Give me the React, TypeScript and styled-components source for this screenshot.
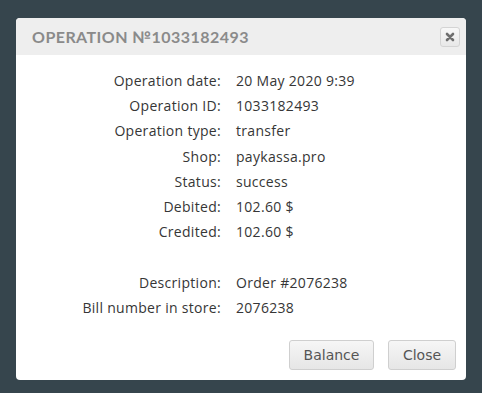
import React from "react";
import styled, { createGlobalStyle } from "styled-components";

const Global = createGlobalStyle`
  html, body {
    margin: 0;
    padding: 0;
    background: #36454d;
    height: 100%;
  }
  #root {
    padding: 18px 16px 0 16px;
  }
`;

const Dialog = styled.div`
  width: 450px;
  height: 362px;
  background: #fff;
  border-radius: 4px;
  display: flex;
  flex-direction: column;
  overflow: hidden;
  box-sizing: border-box;
`;

const Header = styled.div`
  height: 37px;
  background: #eeeeee;
  display: flex;
  align-items: center;
  justify-content: space-between;
  padding: 0 6px 0 16px;
`;

const Title = styled.h1`
  margin: 0;
  font-family: "Lato", "Open Sans", sans-serif;
  font-weight: 700;
  font-size: 16px;
  letter-spacing: 0.45px;
  color: #8a8a8a;
  text-transform: uppercase;
`;

const CloseX = styled.button`
  width: 20px;
  height: 20px;
  padding: 0;
  border: 1px solid #d4d4d4;
  border-radius: 3px;
  background: linear-gradient(#f8f8f8, #e8e8e8);
  display: flex;
  align-items: center;
  justify-content: center;
  cursor: pointer;
`;

const Body = styled.div`
  flex: 1;
  display: grid;
  grid-template-columns: 205px 1fr;
  grid-auto-rows: 25.2px;
  column-gap: 15px;
  padding-top: 13px;
  align-content: start;
  font-family: "Open Sans", sans-serif;
  font-size: 14px;
  letter-spacing: 0.3px;
  color: #363636;
`;

const Label = styled.div`
  text-align: right;
  line-height: 25px;
  white-space: nowrap;
`;

const Value = styled.div`
  line-height: 25px;
  white-space: nowrap;
`;

const Spacer = styled.div`
  grid-column: 1 / span 2;
`;

const Footer = styled.div`
  display: flex;
  justify-content: flex-end;
  gap: 14px;
  padding: 0 10px 10px 0;
`;

const Button = styled.button<{ $w: number }>`
  width: ${(p) => p.$w}px;
  height: 30px;
  border: 1px solid #cfcfcf;
  border-radius: 3px;
  background: linear-gradient(#f6f6f6, #e6e6e6);
  font-family: "DejaVu Sans", Verdana, sans-serif;
  font-size: 14px;
  color: #555;
  padding: 0;
  cursor: pointer;
`;

const rows: [string, string][] = [
  ["Operation date:", "20 May 2020 9:39"],
  ["Operation ID:", "1033182493"],
  ["Operation type:", "transfer"],
  ["Shop:", "paykassa.pro"],
  ["Status:", "success"],
  ["Debited:", "102.60 $"],
  ["Credited:", "102.60 $"],
];

const extra: [string, string][] = [
  ["Description:", "Order #2076238"],
  ["Bill number in store:", "2076238"],
];

const App = () => {
  return (
    <>
      <Global />
      <Dialog>
        <Header>
          <Title>Operation №1033182493</Title>
          <CloseX>
            <svg width="10" height="10" viewBox="0 0 10 10">
              <path d="M2 2 L8 8 M8 2 L2 8" stroke="#6f6f6f" strokeWidth="2.6" strokeLinecap="round" />
            </svg>
          </CloseX>
        </Header>
        <Body>
          {rows.map(([l, v]) => (
            <React.Fragment key={l}>
              <Label>{l}</Label>
              <Value>{v}</Value>
            </React.Fragment>
          ))}
          <Spacer />
          {extra.map(([l, v]) => (
            <React.Fragment key={l}>
              <Label>{l}</Label>
              <Value>{v}</Value>
            </React.Fragment>
          ))}
        </Body>
        <Footer>
          <Button $w={85}>Balance</Button>
          <Button $w={68}>Close</Button>
        </Footer>
      </Dialog>
    </>
  );
};

export default App;
